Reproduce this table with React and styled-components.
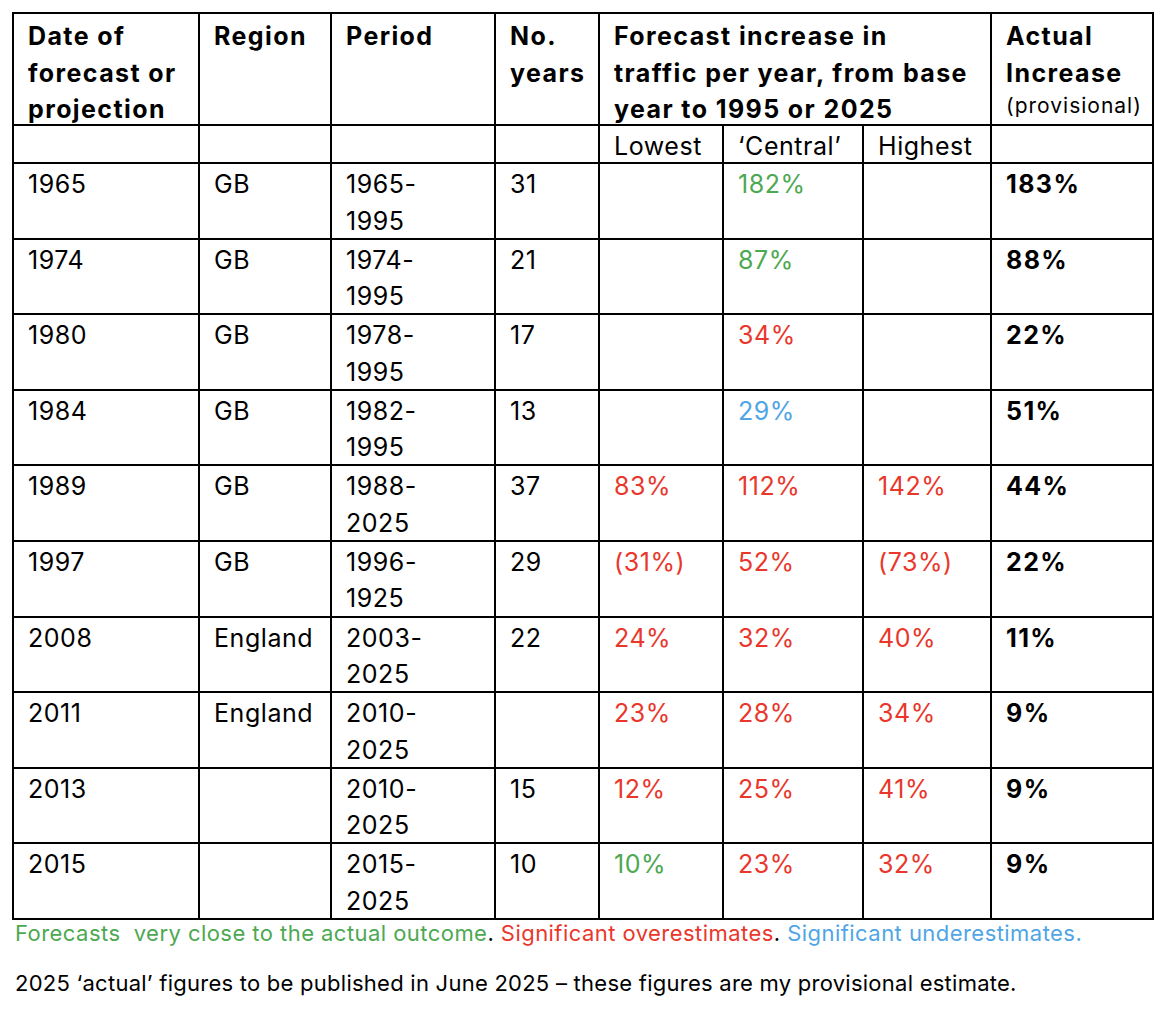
import React from "react";
import styled, { createGlobalStyle } from "styled-components";

const Global = createGlobalStyle`
  html, body { margin: 0; padding: 0; background: #ffffff; }
  body { font-family: Inter, "Liberation Sans", Arial, sans-serif; color: #000; }
`;

const COLORS = {
  black: "#000000",
  green: "#4DA852",
  red: "#E9372C",
  blue: "#50A5E6",
};

const Page = styled.div`
  padding: 12px 0 0 12px;
`;

const Grid = styled.div`
  display: grid;
  grid-template-columns: 186px 132px 164px 104px 124px 140px 128px 162px;
  grid-template-rows: 112px 38px repeat(10, 75.6px);
  width: max-content;
  border-left: 2px solid #000;
  border-top: 2px solid #000;
`;

const Cell = styled.div`
  border-right: 2px solid #000;
  border-bottom: 2px solid #000;
  padding: ${(p) => (p.$head ? "4px 4px 0 14px" : "2px 4px 0 14px")};
  font-size: 25px;
  line-height: 36.5px;
  font-weight: ${(p) => (p.$bold ? 700 : 400)};
  letter-spacing: ${(p) => (p.$bold ? "1.4px" : "0.55px")};
  color: ${(p) => COLORS[p.$tone || "black"]};
  grid-column: ${(p) => (p.$span ? `span ${p.$span}` : "auto")};
  white-space: nowrap;
  overflow: hidden;
`;

const Sub = styled.span`
  display: block;
  font-weight: 400;
  font-size: 21px;
  letter-spacing: 1px;
  line-height: 30px;
`;

const Footer = styled.div`
  padding: 0 0 0 3px;
  font-size: 22px;
`;

const Line = styled.p`
  margin: 0;
  line-height: 26px;
  letter-spacing: ${(p) => p.$track || "0.4px"};
  & + & { margin-top: 24px; }
`;

const Tone = styled.span`
  color: ${(p) => COLORS[p.$tone]};
  white-space: pre;
`;

const rows = [
  ["1965", "GB", "1965-", "1995", "31", null, ["182%", "green"], null, "183%"],
  ["1974", "GB", "1974-", "1995", "21", null, ["87%", "green"], null, "88%"],
  ["1980", "GB", "1978-", "1995", "17", null, ["34%", "red"], null, "22%"],
  ["1984", "GB", "1982-", "1995", "13", null, ["29%", "blue"], null, "51%"],
  ["1989", "GB", "1988-", "2025", "37", ["83%", "red"], ["112%", "red"], ["142%", "red"], "44%"],
  ["1997", "GB", "1996-", "1925", "29", ["(31%)", "red"], ["52%", "red"], ["(73%)", "red"], "22%"],
  ["2008", "England", "2003-", "2025", "22", ["24%", "red"], ["32%", "red"], ["40%", "red"], "11%"],
  ["2011", "England", "2010-", "2025", "", ["23%", "red"], ["28%", "red"], ["34%", "red"], "9%"],
  ["2013", "", "2010-", "2025", "15", ["12%", "red"], ["25%", "red"], ["41%", "red"], "9%"],
  ["2015", "", "2015-", "2025", "10", ["10%", "green"], ["23%", "red"], ["32%", "red"], "9%"],
];

const Forecast = ({ v }) => (
  <Cell $tone={v ? v[1] : "black"}>{v ? v[0] : ""}</Cell>
);

export default function App() {
  return (
    <>
      <Global />
      <Page>
        <Grid>
          <Cell $head $bold>
            Date of
            <br />
            forecast or
            <br />
            projection
          </Cell>
          <Cell $head $bold>Region</Cell>
          <Cell $head $bold>Period</Cell>
          <Cell $head $bold>
            No.
            <br />
            years
          </Cell>
          <Cell $head $bold $span={3}>
            Forecast increase in
            <br />
            traffic per year, from base
            <br />
            year to 1995 or 2025
          </Cell>
          <Cell $head $bold>
            Actual
            <br />
            Increase
            <Sub>(provisional)</Sub>
          </Cell>

          <Cell />
          <Cell />
          <Cell />
          <Cell />
          <Cell>Lowest</Cell>
          <Cell>‘Central’</Cell>
          <Cell>Highest</Cell>
          <Cell />

          {rows.map((r) => (
            <React.Fragment key={r[0]}>
              <Cell>{r[0]}</Cell>
              <Cell>{r[1]}</Cell>
              <Cell>
                {r[2]}
                <br />
                {r[3]}
              </Cell>
              <Cell>{r[4]}</Cell>
              <Forecast v={r[5]} />
              <Forecast v={r[6]} />
              <Forecast v={r[7]} />
              <Cell $bold>{r[8]}</Cell>
            </React.Fragment>
          ))}
        </Grid>
        <Footer>
          <Line $track="0.45px">
            <Tone $tone="green">Forecasts  very close to the actual outcome</Tone>
            .{" "}
            <Tone $tone="red">Significant overestimates</Tone>
            .{" "}
            <Tone $tone="blue">Significant underestimates.</Tone>
          </Line>
          <Line $track="0.25px">
            2025 ‘actual’ figures to be published in June 2025 – these figures are my provisional estimate.
          </Line>
        </Footer>
      </Page>
    </>
  );
}
